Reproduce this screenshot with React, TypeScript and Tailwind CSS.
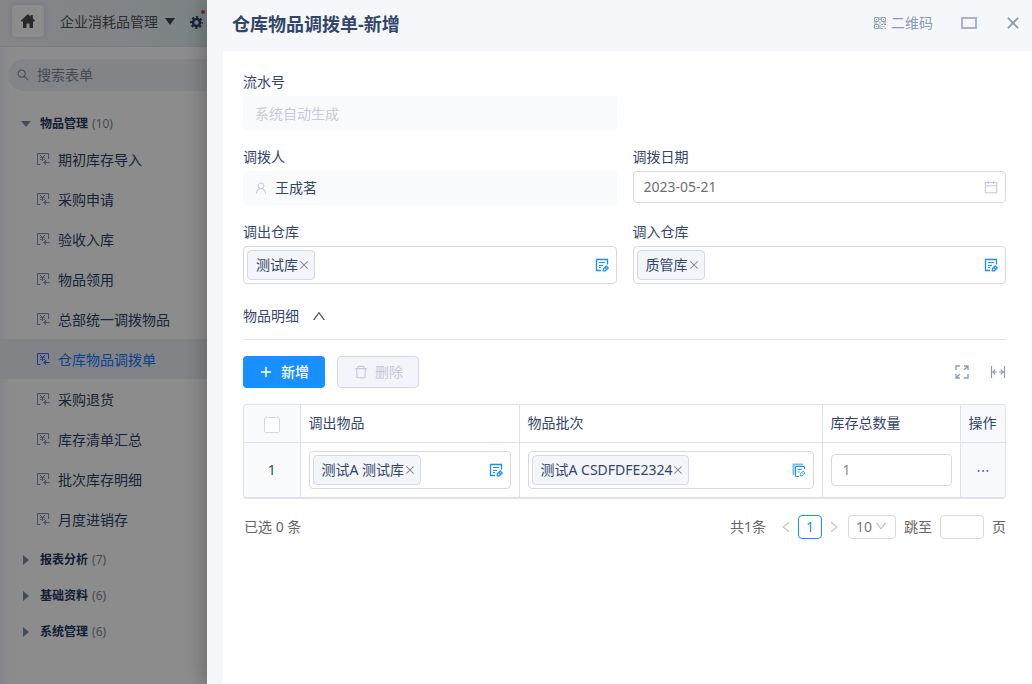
import React from "react";
import {
  AiOutlineCalendar,
  AiOutlineClose,
  AiOutlineDelete,
  AiOutlineDown,
  AiOutlineEllipsis,
  AiOutlineLeft,
  AiOutlinePlus,
  AiOutlineRight,
  AiOutlineSearch,
  AiOutlineUp,
  AiOutlineUser,
} from "react-icons/ai";

interface Group {
  name: string;
  count: number;
  items?: string[];
}

const groups: Group[] = [
  {
    name: "物品管理",
    count: 10,
    items: [
      "期初库存导入",
      "采购申请",
      "验收入库",
      "物品领用",
      "总部统一调拨物品",
      "仓库物品调拨单",
      "采购退货",
      "库存清单汇总",
      "批次库存明细",
      "月度进销存",
    ],
  },
  { name: "报表分析", count: 7 },
  { name: "基础资料", count: 6 },
  { name: "系统管理", count: 6 },
];

const activeItem = "仓库物品调拨单";

/* ---------- icons ---------- */

const HomeIcon = () => (
  <svg width="16" height="16" viewBox="0 0 16 16" fill="currentColor" aria-hidden="true">
    <path d="M8 1 1 7.6l.6 1H3V15h3.5v-4.5h3V15H13V8.6h1.4l.6-1-2.2-2V2h-2v1.7z" />
  </svg>
);

const GearIcon = () => (
  <svg width="13" height="13" viewBox="0 0 14 14" fill="none" stroke="currentColor" aria-hidden="true">
    <circle cx="7" cy="7" r="3.7" strokeWidth="2.6" />
    <circle cx="7" cy="7" r="5.8" strokeWidth="2.2" strokeDasharray="2.4 2.155" strokeDashoffset="1.2" />
  </svg>
);

const FormIcon = () => (
  <svg width="14" height="14" viewBox="0 0 14 14" fill="none" stroke="currentColor" aria-hidden="true">
    <path d="M4.5 12.5h-3v-11h11v5.5" />
    <path d="m4 3 2.5 2.5L9 3M6.5 5.5V9" />
    <path d="M4 5.5h5M4 7.5h5" strokeWidth="0.8" />
    <path d="M13.5 10.5H8M10.2 8.3 8 10.5l2.2 2.2" strokeWidth="1.2" />
  </svg>
);

const QrIcon = () => (
  <svg width="14" height="14" viewBox="0 0 14 14" fill="none" stroke="currentColor" aria-hidden="true">
    <path d="M1.5 1.5h4v4h-4zM8.5 1.5h4v4h-4zM1.5 8.5h4v4h-4zM3 3.5h1M10 3.5h1M3 10.5h1" />
    <path d="M8 8.5h2M11 8.5h2M9.5 10.5h2M8 12.5h2M11.5 12.5H13M7 1v3M1 7h3M6 7h2M10 7h3M7 9v4" />
  </svg>
);

const PickIcon = ({ stacked = false }: { stacked?: boolean }) => (
  <svg width="14" height="14" viewBox="0 0 14 14" fill="none" stroke="currentColor" aria-hidden="true">
    {stacked && <path d="M1.5 12V1.5H11" strokeWidth="2" opacity="0.6" />}
    {stacked ? (
      <path d="M12.5 6V3.5h-9v10H7" />
    ) : (
      <path d="M12.5 6.5v-5h-11v11h4.5" strokeWidth="1.3" />
    )}
    <path d={stacked ? "M5.5 6.5h4M5.5 9h2" : "M4 4.5h6M4 7.5h4M4 9.5h2"} />
    <path
      d="m8.3 10.9 2.9-2.9 2 2-2.9 2.9H8.3zM10 9.6l1.4 1.4"
      strokeWidth={stacked ? 0.9 : 1.3}
      strokeLinejoin="round"
    />
  </svg>
);

const FullscreenIcon = () => (
  <svg width="14" height="14" viewBox="0 0 14 14" fill="none" stroke="currentColor" strokeWidth="1.3" aria-hidden="true">
    <path d="M1 5V1h4M13 9v4H9M9 1h4v4M13 1 9.2 4.8M5 13H1V9M1 13l3.8-3.8" />
  </svg>
);

const ColumnWidthIcon = () => (
  <svg width="16" height="14" viewBox="0 0 16 14" fill="none" stroke="currentColor" strokeWidth="1.2" aria-hidden="true">
    <path d="M1.5 1v12M14.5 1v12M3 7h4M9 7h4M5.2 4.6 2.8 7l2.4 2.4M10.8 4.6 13.2 7l-2.4 2.4" />
  </svg>
);

/* ---------- form parts ---------- */

interface TagFieldProps {
  id?: string;
  label?: string;
  value: string;
  stacked?: boolean;
}

const TagField: React.FC<TagFieldProps> = ({ id, label, value, stacked }) => (
  <div
    id={id}
    role="group"
    aria-label={label}
    className="flex h-[38px] items-center justify-between rounded border border-[#d9d9d9] bg-white pl-[3px] pr-[7px]"
  >
    <span className="flex h-[30px] items-center rounded border border-[#d5d9e4] bg-[#f3f5fa] pl-2 pr-1 whitespace-nowrap">
      {value}
      <button type="button" aria-label={`移除 ${value}`} className="text-[#8c8c8c]">
        <AiOutlineClose size={12} />
      </button>
    </span>
    <button type="button" aria-label="选择" className="text-[#1890ff]">
      <PickIcon stacked={stacked} />
    </button>
  </div>
);

const labelClass = "flex h-7 items-center";

/* ---------- sidebar ---------- */

const Sidebar: React.FC = () => (
  <aside className="relative w-[207px] shrink-0 overflow-hidden bg-linear-to-r from-[#f2f4fa] to-white to-5%">
    <header className="flex h-[47px] items-center border-b border-[#dde1ea] bg-linear-to-r from-[#f3f3f7] via-[#eef1f8] to-[#dfeff3] pb-1 pl-3">
      <button
        type="button"
        aria-label="首页"
        className="flex size-8 items-center justify-center rounded bg-white text-[#4a4a4a] shadow-[0_0_6px_#d0d6ea]"
      >
        <HomeIcon />
      </button>
      <button type="button" className="ml-4 flex items-center gap-1.5 pt-0.5 whitespace-nowrap text-[#555]">
        企业消耗品管理
        <svg width="12" height="8" viewBox="0 0 12 8" fill="#444" aria-hidden="true">
          <path d="M1 0h10L6 7z" />
        </svg>
      </button>
      <button type="button" aria-label="设置" className="relative ml-3.5 shrink-0 pt-0.5 text-[#2c3f66]">
        <GearIcon />
        <span className="absolute -right-0.5 -top-1 size-1 rounded-full bg-[#ff3366]" />
      </button>
    </header>

    <label className="mt-3 ml-2 flex h-8 items-center gap-[7px] rounded-l-full bg-[#eff1f6] pl-2 text-[#7d8797]">
      <AiOutlineSearch size={14} className="shrink-0" />
      <input
        type="search"
        aria-label="搜索表单"
        placeholder="搜索表单"
        className="w-full bg-transparent outline-none placeholder:text-[#7d8797]"
      />
    </label>

    <nav className="mt-3.5">
      {groups.map((group) => (
        <div key={group.name}>
          <button type="button" className="flex h-9 w-full items-center pt-0.5 pl-5 text-xs">
            <svg width="12" height="12" viewBox="0 0 12 12" fill="#7c8ba5" aria-hidden="true">
              <path d={group.items ? "M1 3h10L6 9z" : "M3 1v10l6-5z"} />
            </svg>
            <b className="ml-2 text-[#23375e]">{group.name}</b>
            <span className="ml-1 text-[#7d8797]">({group.count})</span>
          </button>
          {group.items && (
            <ul className="-mt-0.5 mb-0.5">
              {group.items.map((item) => (
                <li key={item}>
                  <a
                    href="#"
                    aria-current={item === activeItem ? "page" : undefined}
                    className={
                      item === activeItem
                        ? "flex h-10 items-center gap-2 bg-[#ebeff5] pl-9 text-[#1677ff]"
                        : "flex h-10 items-center gap-2 pl-9 text-[#2f436a]"
                    }
                  >
                    <span className={item === activeItem ? "text-[#2f6fff]" : "text-[#8792a8]"}>
                      <FormIcon />
                    </span>
                    <span className="pt-0.5">{item}</span>
                  </a>
                </li>
              ))}
            </ul>
          )}
        </div>
      ))}
    </nav>

    {/* modal mask */}
    <div className="absolute inset-0 bg-black/45" />
  </aside>
);

/* ---------- detail table ---------- */

const DetailTable: React.FC = () => (
  <div className="mt-4 overflow-hidden rounded border border-b-2 border-[#dfe2ea]">
    <table className="w-full table-fixed border-collapse text-left">
      <colgroup>
        <col className="w-14" />
        <col className="w-[219px]" />
        <col />
        <col className="w-[138px]" />
        <col className="w-[45px]" />
      </colgroup>
      <thead>
        <tr className="h-[37px] border-b border-[#dfe2ea]">
          <th className="border-r border-[#dfe2ea] bg-[#fafbfd]">
            <input
              type="checkbox"
              aria-label="全选"
              className="mx-auto mt-1 block size-4 appearance-none rounded-xs border border-[#d9d9d9] bg-white"
            />
          </th>
          <th className="border-r border-[#dfe2ea] px-2 font-normal">调出物品</th>
          <th className="border-r border-[#dfe2ea] px-2 font-normal">物品批次</th>
          <th className="border-r border-[#dfe2ea] px-2 font-normal">库存总数量</th>
          <th className="bg-[#f8f9fc] px-2 font-normal whitespace-nowrap">操作</th>
        </tr>
      </thead>
      <tbody>
        <tr className="h-[55px]">
          <td className="border-r border-[#dfe2ea] bg-[#fafbfd] text-center">1</td>
          <td className="border-r border-[#dfe2ea] px-2">
            <TagField label="调出物品" value="测试A 测试库" />
          </td>
          <td className="border-r border-[#dfe2ea] px-2">
            <TagField label="物品批次" value="测试A CSDFDFE2324" stacked />
          </td>
          <td className="border-r border-[#dfe2ea] px-2">
            <input
              type="text"
              aria-label="库存总数量"
              defaultValue="1"
              className="block h-8 w-full rounded border border-[#d9d9d9] px-[11px] text-[#8c8c8c]"
            />
          </td>
          <td className="bg-[#f8f9fc] text-center">
            <button type="button" aria-label="更多" className="align-middle">
              <AiOutlineEllipsis size={16} />
            </button>
          </td>
        </tr>
      </tbody>
    </table>
  </div>
);

const Pagination: React.FC = () => (
  <div className="mt-4 flex h-6 items-center justify-between pl-px text-[#666]">
    <span>已选 0 条</span>
    <div className="flex items-center gap-2">
      <span className="mr-1">共1条</span>
      <div className="flex items-center gap-1">
        <button type="button" aria-label="上一页" className="flex w-4 justify-center text-[#bfbfbf]">
          <AiOutlineLeft size={14} />
        </button>
        <button type="button" className="size-6 rounded border border-[#1890ff] leading-5 text-[#1890ff]">
          1
        </button>
        <button type="button" aria-label="下一页" className="flex w-4 justify-center text-[#bfbfbf]">
          <AiOutlineRight size={14} />
        </button>
        <div className="relative ml-0.5">
          <select
            aria-label="每页条数"
            className="block h-6 w-12 appearance-none rounded border border-[#d9d9d9] bg-white pl-[7px] leading-5 text-[#7a7a7a]"
          >
            <option>10</option>
          </select>
          <AiOutlineDown size={14} className="pointer-events-none absolute right-2 top-1 text-[#bfbfbf]" />
        </div>
      </div>
      <label htmlFor="jump">跳至</label>
      <input id="jump" type="text" className="h-6 w-11 rounded border border-[#d9d9d9] px-2" />
      <span>页</span>
    </div>
  </div>
);

/* ---------- drawer ---------- */

const Drawer: React.FC = () => (
  <main className="relative flex min-w-0 flex-1 flex-col bg-[#f5f7fb] pl-4 shadow-[-6px_0_16px_rgba(0,0,0,0.2)]">
    <header className="flex h-[51px] items-center justify-between pb-1 pl-[9px] pr-[11px]">
      <h1 className="text-lg font-bold">仓库物品调拨单-新增</h1>
      <div className="flex items-center pb-0.5 text-[#8c9ab3]">
        <button type="button" className="flex items-center gap-1">
          <QrIcon />
          二维码
        </button>
        <button type="button" aria-label="最大化" className="ml-7 h-3 w-4 border-2 border-[#a7b3c7]" />
        <button type="button" aria-label="关闭" className="ml-7">
          <AiOutlineClose size={16} strokeWidth={40} />
        </button>
      </div>
    </header>

    <form className="flex-1 bg-white pt-[17px] pb-8 pl-5 pr-[26px]" onSubmit={(e) => e.preventDefault()}>
      <div className="grid grid-cols-2 gap-x-4 gap-y-[13px]">
        <div>
          <label htmlFor="serial" className={labelClass}>流水号</label>
          <input
            id="serial"
            type="text"
            disabled
            placeholder="系统自动生成"
            className="block h-[34px] w-full rounded bg-[#f8fafc] px-3 placeholder:text-[#c8cbd9]"
          />
        </div>
        <div />
        <div>
          <label htmlFor="operator" className={labelClass}>调拨人</label>
          <div className="flex h-[34px] items-center gap-[7px] rounded bg-[#f8fafc] px-[11px]">
            <AiOutlineUser size={14} className="shrink-0 text-[#c8cbd9]" />
            <input id="operator" type="text" readOnly value="王成茗" className="w-full bg-transparent outline-none" />
          </div>
        </div>
        <div>
          <label htmlFor="date" className={labelClass}>调拨日期</label>
          <div className="flex h-8 items-center rounded border border-[#d9d9d9] pl-2.5 pr-1.5">
            <input id="date" type="text" defaultValue="2023-05-21" className="w-full text-[#707070] outline-none" />
            <AiOutlineCalendar size={16} className="shrink-0 text-[#c5c8da]" />
          </div>
        </div>
        <div>
          <label htmlFor="from" className={labelClass}>调出仓库</label>
          <TagField id="from" label="调出仓库" value="测试库" />
        </div>
        <div>
          <label htmlFor="to" className={labelClass}>调入仓库</label>
          <TagField id="to" label="调入仓库" value="质管库" />
        </div>
      </div>

      <div className="mt-2 flex h-12 items-center border-b border-[#dfe2ea]">
        <h2>物品明细</h2>
        <button type="button" aria-label="收起" className="ml-3 text-[#555]">
          <AiOutlineUp size={16} />
        </button>
      </div>

      <div className="mt-4 flex items-center justify-between">
        <div className="flex gap-3">
          <button
            type="button"
            className="flex h-8 w-[82px] items-center justify-center gap-2 rounded bg-[#1890ff] font-medium text-white"
          >
            <AiOutlinePlus size={14} strokeWidth={40} />
            新增
          </button>
          <button
            type="button"
            disabled
            className="flex h-8 w-[82px] items-center justify-center gap-1.5 rounded border border-[#d5d9e4] bg-[#f3f5fa] text-[#c5c8d6]"
          >
            <AiOutlineDelete size={16} />
            删除
          </button>
        </div>
        <div className="flex items-center gap-[21px] text-[#8c9ab3]">
          <button type="button" aria-label="全屏">
            <FullscreenIcon />
          </button>
          <button type="button" aria-label="列宽">
            <ColumnWidthIcon />
          </button>
        </div>
      </div>

      <DetailTable />
      <Pagination />
    </form>
  </main>
);

export default function App() {
  return (
    <div className="flex min-h-screen bg-white font-['Noto_Sans','Noto_Sans_CJK_SC',sans-serif] text-sm text-[#32466b]">
      <Sidebar />
      <Drawer />
    </div>
  );
}
